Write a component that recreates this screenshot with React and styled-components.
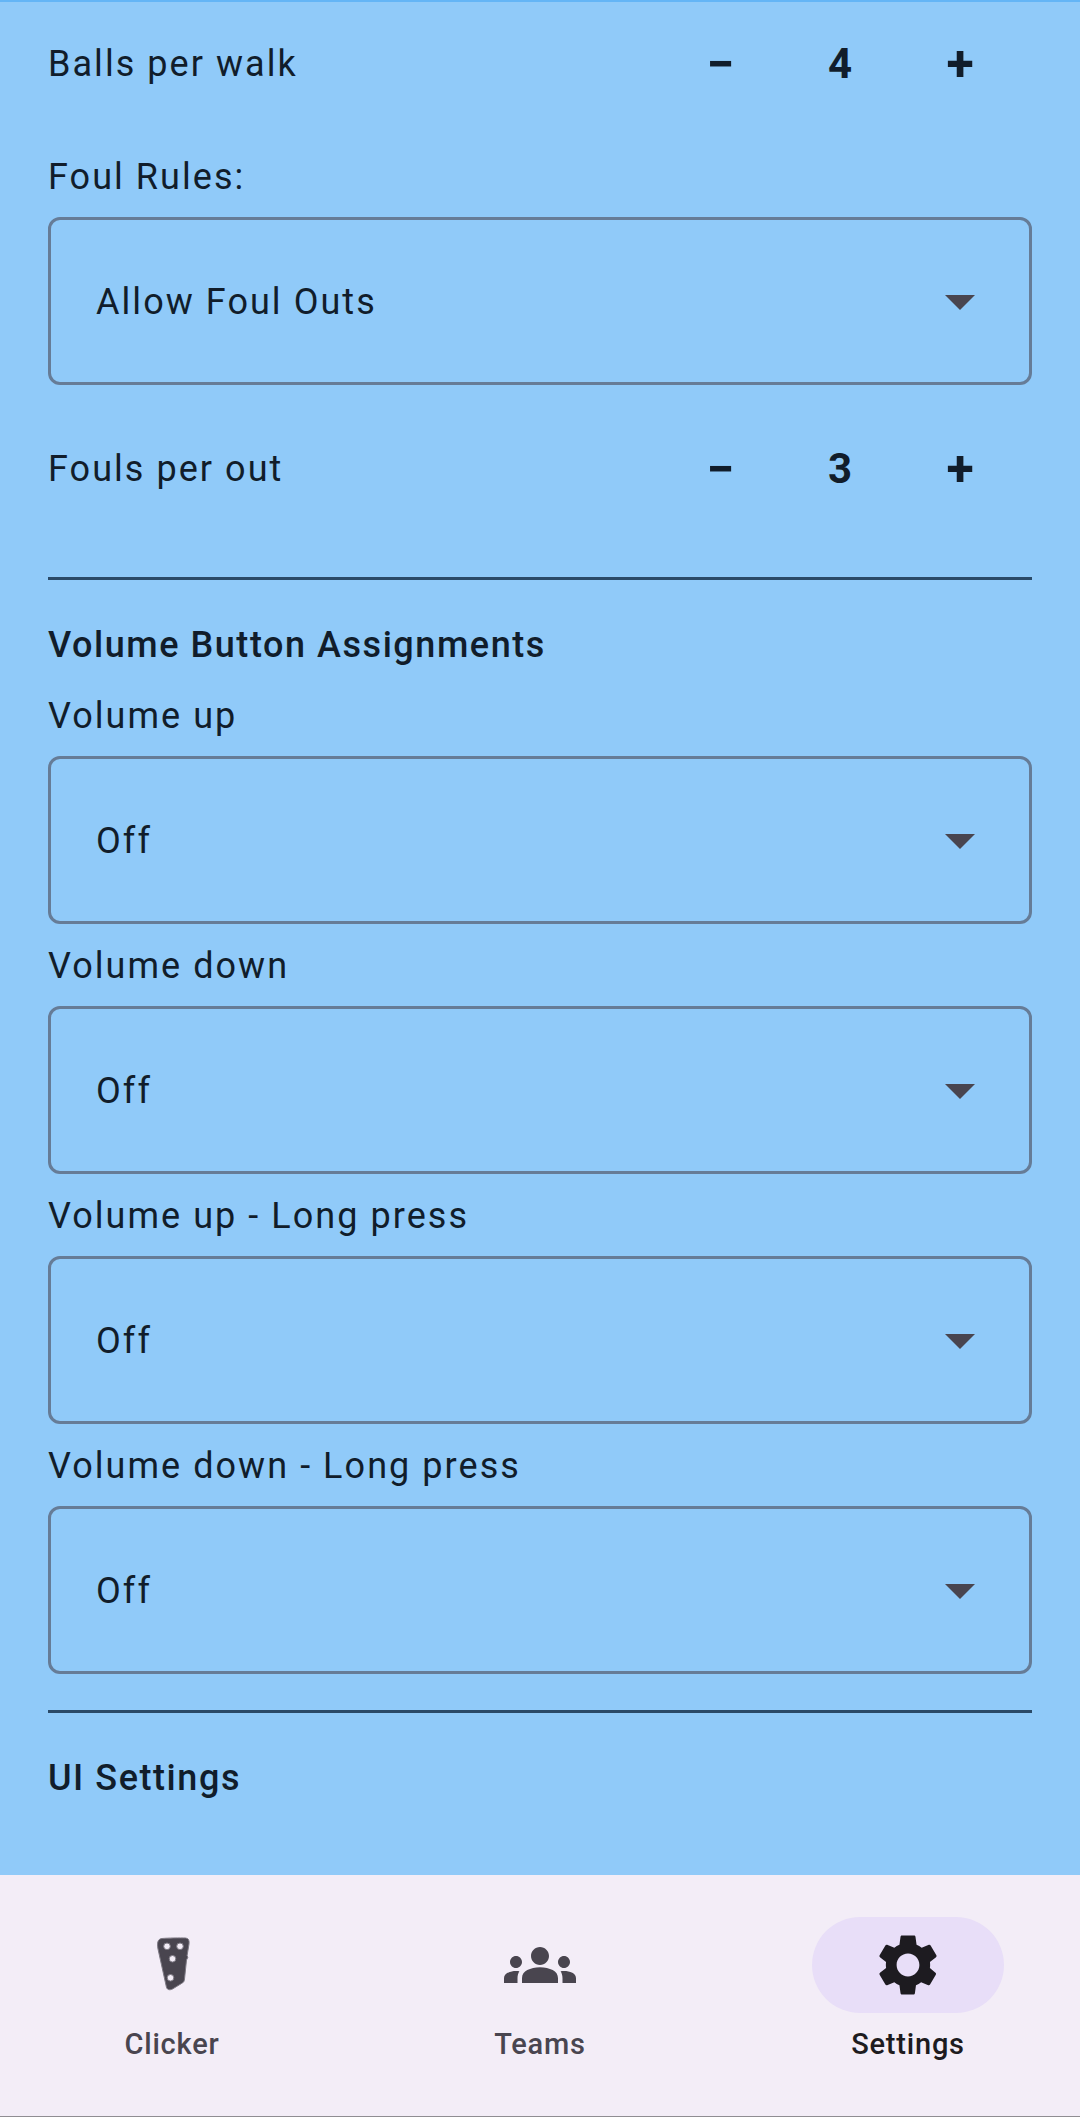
import React from 'react'
import styled, { createGlobalStyle } from 'styled-components'

const GlobalStyle = createGlobalStyle`
    html, body {
        margin: 0;
        padding: 0;
        background: #90CAF9;
    }
    * {
        box-sizing: border-box;
    }
`

const Screen = styled.div`
    width: 1080px;
    height: 2117px;
    display: flex;
    flex-direction: column;
    overflow: hidden;
    background: #90CAF9;
    border-top: 2px solid #64B5F6;
    font-family: Roboto, "Liberation Sans", sans-serif;
    color: #111D2B;
`

const Content = styled.main`
    flex: 1;
    padding: 0 48px;
    display: flex;
    flex-direction: column;
`

const StepperRow = styled.div`
    display: flex;
    align-items: center;
    justify-content: space-between;
    height: ${({ $height }) => $height}px;
    margin-top: ${({ $top }) => $top || 0}px;
`

const Label = styled.div`
    font-size: 36px;
    line-height: 48px;
    letter-spacing: 2.05px;
    font-weight: 400;
`

const Stepper = styled.div`
    display: grid;
    grid-template-columns: repeat(3, 120px);
    align-items: center;
    margin-right: 12px;
    text-align: center;
    font-size: 42px;
    line-height: 48px;
    font-weight: 700;
`

const StepButton = styled.span`
    font-size: 50px;
`

const Field = styled.div`
    display: flex;
    flex-direction: column;
    gap: 16px;
    margin-top: ${({ $top }) => $top || 0}px;
    margin-bottom: 18px;
`

const Select = styled.div`
    height: 168px;
    padding: 0 33px 0 45px;
    display: flex;
    align-items: center;
    justify-content: space-between;
    border: 3px solid #667C97;
    border-radius: 12px;
    font-size: 36px;
    letter-spacing: 2.05px;
`

const SelectValue = styled.span`
    padding-top: 2px;
`

const Divider = styled.hr`
    height: 3px;
    margin: ${({ $top }) => $top}px 0 0;
    border: 0;
    background: #2A4A68;
`

const Heading = styled.h2`
    margin: ${({ $top }) => $top}px 0 ${({ $bottom }) => $bottom || 0}px;
    font-size: 36px;
    line-height: 48px;
    font-weight: 500;
    letter-spacing: 1.55px;
    color: #111D2B;
`

const NavBar = styled.nav`
    height: 242px;
    display: grid;
    grid-template-columns: repeat(3, 344px);
    gap: 24px;
    background: #F3EDF7;
    border-bottom: 1px solid #8f8d92;
`

const Tab = styled.div`
    padding-top: 42px;
    display: flex;
    flex-direction: column;
    align-items: center;
    color: ${({ $active }) => ($active ? '#1D1B20' : '#49454F')};
`

const Pill = styled.div`
    width: 192px;
    height: 96px;
    display: flex;
    align-items: center;
    justify-content: center;
    border-radius: 48px;
    background: ${({ $active }) => ($active ? '#E8DEF8' : 'transparent')};
`

const TabLabel = styled.span`
    margin-top: 7px;
    font-size: 29px;
    line-height: 48px;
    font-weight: 500;
    letter-spacing: 0.8px;
`

const Icon = styled.svg`
    width: 72px;
    height: 72px;
    fill: currentColor;
    display: block;
`

const ArrowIcon = styled(Icon)`
    color: #49454F;
`

const ArrowDown = () => (
    <ArrowIcon viewBox="0 0 24 24">
        <path d="M7 10l5 5 5-5z" />
    </ArrowIcon>
)

// Custom clicker shape, no package has it
const ClickerIcon = () => (
    <Icon viewBox="0 0 72 72">
        <path
            fillRule="evenodd"
            stroke="#7d7983"
            strokeWidth="1"
            d="M26 9.500C32 9 44 8.800 49.500 9 52.500 9.200 53.500 11.500 53 15L51 27l1 1-1.500 3L48.500 50c-.200 2.500-1 3.500-3 4.500L36.500 60c-2.500 1.300-5 1-6-1.500L22 20C21 14 21.500 10 26 9.500zM31 14a3.300 3.300 0 1 0 0 6.600 3.300 3.300 0 0 0 0-6.600zM44 14a3.300 3.300 0 1 0 0 6.600 3.300 3.300 0 0 0 0-6.600zM36.500 26.500a3.300 3.300 0 1 0 0 6.600 3.300 3.300 0 0 0 0-6.600zM34.500 45.500a3.300 3.300 0 1 0 0 6.600 3.300 3.300 0 0 0 0-6.600z"
        />
    </Icon>
)

const TeamsIcon = () => (
    <Icon viewBox="0 0 24 24">
        <path d="M12 12.75c1.630 0 3.070.390 4.240.900 1.080.480 1.760 1.560 1.760 2.730V18H6v-1.610c0-1.180.680-2.260 1.760-2.730 1.170-.520 2.610-.910 4.240-.910zM4 13c1.100 0 2-.900 2-2s-.900-2-2-2-2 .900-2 2 .900 2 2 2zm1.130 1.100c-.370-.060-.740-.100-1.130-.100-.990 0-1.930.210-2.780.580C.480 14.900 0 15.620 0 16.430V18h4.500v-1.610c0-.830.230-1.610.630-2.290zM20 13c1.100 0 2-.900 2-2s-.900-2-2-2-2 .900-2 2 .900 2 2 2zm4 3.430c0-.810-.480-1.530-1.220-1.850-.850-.370-1.790-.580-2.780-.580-.390 0-.760.040-1.130.100.400.680.630 1.460.630 2.290V18H24v-1.570zM12 6c1.660 0 3 1.340 3 3s-1.340 3-3 3-3-1.340-3-3 1.340-3 3-3z" />
    </Icon>
)

const SettingsIcon = () => (
    <Icon viewBox="0 0 24 24">
        <path
            fillRule="evenodd"
            d="M19.300 13c.040-.330.080-.660.080-1s-.030-.660-.070-1l2.030-1.600c.180-.140.230-.400.120-.610l-1.920-3.320c-.120-.220-.370-.290-.590-.220l-2.390.960c-.520-.400-1.090-.730-1.710-1l-.360-2.600c-.040-.240-.240-.410-.480-.410H9.980c-.240 0-.430.170-.470.410l-.360 2.600c-.620.270-1.190.600-1.710 1l-2.390-.960c-.220-.080-.470 0-.590.220L2.540 8.790c-.120.210-.080.470.120.610L4.690 11c-.040.340-.070.660-.070 1s.040.670.080 1l-2.040 1.600c-.180.140-.230.400-.120.610l1.920 3.320c.120.220.370.290.590.220l2.390-.960c.520.400 1.090.730 1.710 1l.360 2.600c.050.240.240.410.480.410h3.840c.240 0 .440-.170.470-.410l.360-2.600c.620-.270 1.190-.600 1.710-1l2.390.960c.220.080.470 0 .590-.220l1.920-3.320c.120-.220.070-.470-.120-.610L19.300 13zM12 15.800c-2.100 0-3.800-1.700-3.800-3.800s1.700-3.800 3.800-3.800 3.800 1.700 3.800 3.800-1.700 3.800-3.800 3.800z"
        />
    </Icon>
)

const volumeFields = ['Volume up', 'Volume down', 'Volume up - Long press', 'Volume down - Long press']

const tabs = [
    { name: 'Clicker', icon: <ClickerIcon /> },
    { name: 'Teams', icon: <TeamsIcon /> },
    { name: 'Settings', icon: <SettingsIcon />, active: true },
]

const Counter = ({ label, value, height, top }) => (
    <StepperRow $height={height} $top={top}>
        <Label>{label}</Label>
        <Stepper>
            <StepButton>−</StepButton>
            <span>{value}</span>
            <StepButton>+</StepButton>
        </Stepper>
    </StepperRow>
)

const Dropdown = ({ value }) => (
    <Select>
        <SelectValue>{value}</SelectValue>
        <ArrowDown />
    </Select>
)

export default function App() {
    return (
        <Screen>
            <GlobalStyle />
            <Content>
                <Counter label="Balls per walk" value="4" height={124} />
                <Field $top={27}>
                    <Label>Foul Rules:</Label>
                    <Dropdown value="Allow Foul Outs" />
                </Field>
                <Counter label="Fouls per out" value="3" height={120} top={6} />
                <Divider $top={48} />
                <Heading $top={41} $bottom={23}>Volume Button Assignments</Heading>
                {volumeFields.map((name) => (
                    <Field key={name}>
                        <Label>{name}</Label>
                        <Dropdown value="Off" />
                    </Field>
                ))}
                <Divider $top={18} />
                <Heading $top={41}>UI Settings</Heading>
            </Content>
            <NavBar>
                {tabs.map((tab) => (
                    <Tab key={tab.name} $active={tab.active}>
                        <Pill $active={tab.active}>{tab.icon}</Pill>
                        <TabLabel>{tab.name}</TabLabel>
                    </Tab>
                ))}
            </NavBar>
        </Screen>
    )
}
